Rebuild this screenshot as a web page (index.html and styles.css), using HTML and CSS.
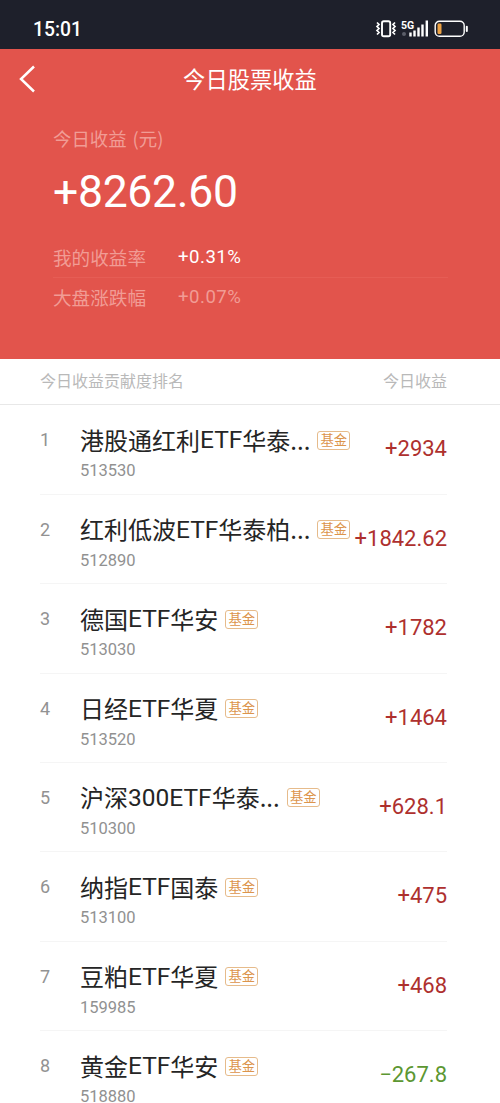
FILE: index.html
```html
<!DOCTYPE html>
<html lang="zh-CN">
<head>
<meta charset="utf-8">
<title>今日股票收益</title>
<link rel="stylesheet" href="styles.css">
</head>
<body>
<div class="status">
  <span class="time">15:01</span>
  <svg class="status-icons" width="96" height="24" viewBox="0 0 96 24" fill="none">
    <rect x="7" y="4.2" width="8.2" height="15" rx="1.8" stroke="#fff" stroke-width="1.9"/>
    <path d="M2 5.500l2 2-2 2 2 2-2 2 2 2-2 2M20 5.500l-2 2 2 2-2 2 2 2-2 2 2 2" stroke="#fff" stroke-width="1.7"/>
    <text class="net" x="26" y="11.500">5G</text>
    <circle cx="29" cy="17" r="2" fill="#5c5e69"/>
    <path d="M35.500 19.500v-4M39.500 19.500v-6M43.500 19.500v-9M47.500 19.500v-12M51.800 19.500V3.500" stroke="#fff" stroke-width="2.4"/>
    <rect x="60.200" y="4.200" width="29" height="15" rx="4.300" stroke="#fff" stroke-width="1.400"/>
    <rect x="62.500" y="6.500" width="4" height="10.500" rx="1.200" fill="#eda244"/>
    <path d="M91.800 9.700v4.300" stroke="#fff" stroke-width="2" stroke-linecap="round"/>
  </svg>
</div>
<header class="hero">
  <div class="nav">
    <svg class="back" width="18" height="28" viewBox="0 0 18 28" fill="none"><path d="M16 1.500L3 14l13 12.500" stroke="#fff" stroke-width="2.500"/></svg>
    <h1 class="title">今日股票收益</h1>
  </div>
  <div class="summary">
    <div class="label">今日收益<span class="unit">(元)</span></div>
    <div class="total">+8262.60</div>
    <div class="rate rate-mine"><span class="rate-name">我的收益率</span><span class="rate-value">+0.31%</span></div>
    <div class="rate"><span class="rate-name">大盘涨跌幅</span><span class="rate-value">+0.07%</span></div>
  </div>
</header>
<div class="list-head"><span>今日收益贡献度排名</span><span>今日收益</span></div>
<main class="list">
  <div class="row"><span class="rank">1</span><div class="fund"><div class="name">港股通红利<span class="latin">ETF</span>华泰...<span class="tag">基金</span></div><div class="code">513530</div></div><span class="amount">+2934</span></div>
  <div class="row"><span class="rank">2</span><div class="fund"><div class="name">红利低波<span class="latin">ETF</span>华泰柏...<span class="tag">基金</span></div><div class="code">512890</div></div><span class="amount">+1842.62</span></div>
  <div class="row"><span class="rank">3</span><div class="fund"><div class="name">德国<span class="latin">ETF</span>华安<span class="tag">基金</span></div><div class="code">513030</div></div><span class="amount">+1782</span></div>
  <div class="row"><span class="rank">4</span><div class="fund"><div class="name">日经<span class="latin">ETF</span>华夏<span class="tag">基金</span></div><div class="code">513520</div></div><span class="amount">+1464</span></div>
  <div class="row"><span class="rank">5</span><div class="fund"><div class="name">沪深<span class="latin">300ETF</span>华泰...<span class="tag">基金</span></div><div class="code">510300</div></div><span class="amount">+628.1</span></div>
  <div class="row"><span class="rank">6</span><div class="fund"><div class="name">纳指<span class="latin">ETF</span>国泰<span class="tag">基金</span></div><div class="code">513100</div></div><span class="amount">+475</span></div>
  <div class="row"><span class="rank">7</span><div class="fund"><div class="name">豆粕<span class="latin">ETF</span>华夏<span class="tag">基金</span></div><div class="code">159985</div></div><span class="amount">+468</span></div>
  <div class="row"><span class="rank">8</span><div class="fund"><div class="name">黄金<span class="latin">ETF</span>华安<span class="tag">基金</span></div><div class="code">518880</div></div><span class="amount down">−267.8</span></div>
</main>
</body>
</html>
```
FILE: styles.css
```css
* { box-sizing: border-box; }
body {
  margin: 0;
  height: 1103px;
  overflow: hidden;
  display: flex;
  flex-direction: column;
  background: #fff;
  font-family: "Noto Sans CJK SC", sans-serif;
}
.status, .hero, .list-head, .list { flex: none; }
.status {
  height: 49px;
  padding: 10px 29px 0 33px;
  display: flex;
  justify-content: space-between;
  background: #1e202b;
  color: #fff;
}
.time { font: 500 19.3px/39px Roboto, sans-serif; letter-spacing: 0; }
.status-icons { margin-top: 7px; }
.net { font: 700 10.5px Roboto, sans-serif; fill: #fff; }
.hero { height: 310px; background: #e2544c; color: #fff; }
.nav {
  height: 59px;
  padding: 0 18px;
  display: grid;
  grid-template-columns: 18px 1fr 18px;
  align-items: center;
}
.title { margin: 0 0 2px; font-size: 22.3px; line-height: 32px; font-weight: 400; text-align: center; }
.summary { padding: 18px 52px 0 53px; }
.label { font-size: 18.4px; line-height: 24px; color: #f19c95; }
.unit { margin-left: 6px; }
.total {
  margin-top: 12px;
  font: 400 44.5px/60px Roboto, "Noto Sans CJK SC", sans-serif;
  letter-spacing: -0.3px;
  white-space: nowrap;
}
.rate {
  height: 37px;
  display: flex;
  align-items: center;
  font-size: 18.6px;
  color: #f19c95;
}
.rate-name { width: 125px; }
.rate-value { font: 400 18.6px Roboto, sans-serif; letter-spacing: 0.5px; }
.rate-mine { margin-top: 14px; height: 42px; border-bottom: 1px solid #e65d55; }
.rate-mine .rate-value { color: #fff; }
.list-head {
  height: 46.4px;
  padding: 0 53px 3px 40px;
  display: flex;
  align-items: center;
  justify-content: space-between;
  border-bottom: 1px solid #e8e8e8;
  font-size: 16px;
  color: #b9b9b9;
}
.list { padding: 0 53px 0 40px; }
.row {
  height: 89.4px;
  padding-top: 19px;
  display: flex;
  border-bottom: 1px solid #f5f5f5;
}
.rank { width: 40px; flex: none; font: 400 18px/32px Roboto, sans-serif; color: #929292; }
.fund { flex: 1; min-width: 0; }
.name {
  display: flex;
  align-items: center;
  font-size: 24px;
  line-height: 30px;
  color: #252525;
  white-space: nowrap;
}
.latin { padding-top: 1px; font-family: Roboto, sans-serif; font-size: 24.5px; }
.tag {
  margin: 1px 0 0 7px;
  width: 33px;
  height: 19px;
  border: 1px solid #e6bb8b;
  border-radius: 3px;
  font-size: 13.3px;
  line-height: 16px;
  text-align: center;
  color: #dc944c;
}
.code { margin-top: 6px; font: 400 16.5px/20px Roboto, sans-serif; color: #919191; }
.amount {
  flex: none;
  margin: 9px 0 0 -20px;
  font: 400 22px/31px Roboto, sans-serif;
  color: #ae302e;
}
.down { color: #5c9732; }
```
